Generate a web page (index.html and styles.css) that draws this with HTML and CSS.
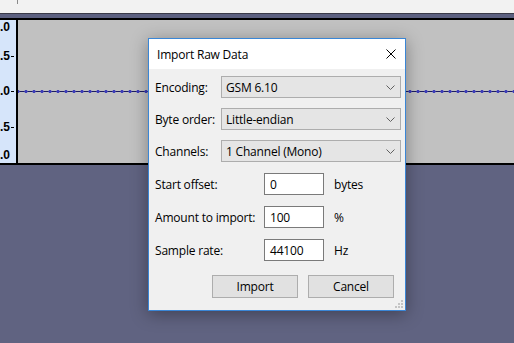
FILE: index.html
```html
<!DOCTYPE html>
<html lang="en">
<head>
<meta charset="UTF-8">
<title>Import Raw Data</title>
<link rel="stylesheet" href="styles.css">
</head>
<body>
    <div class="app">
        <!-- toolbar strip and track header -->
        <div class="toolbar"><span class="toolbar-sep"></span></div>
        <div class="band"></div>

        <!-- audio track -->
        <div class="track">
            <div class="ruler">
                <span class="mark m1">.0</span>
                <span class="mark m2">.5<i></i></span>
                <span class="mark m3">.0<i></i></span>
                <span class="mark m4">.5<i></i></span>
                <span class="mark m5">.0</span>
            </div>
            <div class="wave"><div class="wave-line"></div></div>
        </div>

        <!-- dialog -->
        <div class="dialog">
            <div class="titlebar">
                <span class="title">Import Raw Data</span>
                <svg class="close" width="10" height="10" viewBox="0 0 10 10">
                    <path d="M0.5 0.5 L9.5 9.5 M9.5 0.5 L0.5 9.5" stroke="#000" stroke-width="1" fill="none"/>
                </svg>
            </div>
            <div class="body">
                <div class="combos">
                    <label>Encoding:</label>
                    <div class="combo">GSM 6.10<svg width="9" height="5" viewBox="0 0 9 5"><path d="M0.5 0.5 L4.5 4.5 L8.5 0.5" stroke="#606060" fill="none"/></svg></div>
                    <label>Byte order:</label>
                    <div class="combo">Little-endian<svg width="9" height="5" viewBox="0 0 9 5"><path d="M0.5 0.5 L4.5 4.5 L8.5 0.5" stroke="#606060" fill="none"/></svg></div>
                    <label>Channels:</label>
                    <div class="combo">1 Channel (Mono)<svg width="9" height="5" viewBox="0 0 9 5"><path d="M0.5 0.5 L4.5 4.5 L8.5 0.5" stroke="#606060" fill="none"/></svg></div>
                </div>
                <div class="fields">
                    <label>Start offset:</label>
                    <div class="field">0</div>
                    <span class="unit">bytes</span>
                    <label>Amount to import:</label>
                    <div class="field">100</div>
                    <span class="unit">%</span>
                    <label>Sample rate:</label>
                    <div class="field">44100</div>
                    <span class="unit">Hz</span>
                </div>
                <div class="buttons">
                    <button>Import</button>
                    <button>Cancel</button>
                </div>
            </div>
            <svg class="grip" width="8" height="8" viewBox="0 0 8 8">
                <rect x="6" y="0" width="2" height="2" fill="#c4c4c4"/>
                <rect x="3" y="3" width="2" height="2" fill="#c4c4c4"/>
                <rect x="6" y="3" width="2" height="2" fill="#c4c4c4"/>
                <rect x="0" y="6" width="2" height="2" fill="#c4c4c4"/>
                <rect x="3" y="6" width="2" height="2" fill="#c4c4c4"/>
                <rect x="6" y="6" width="2" height="2" fill="#c4c4c4"/>
            </svg>
        </div>
    </div>
</body>
</html>
```

FILE: styles.css
```css
body {
    margin: 0;
    background-color: #606381;
    font-family: "Open Sans", sans-serif;
    font-size: 12px;
    color: #000;
}
.app {
    position: relative;
    width: 514px;
    height: 343px;
    overflow: hidden;
}
.toolbar {
    height: 13px;
    background-color: #f2f2f2;
    border-bottom: 1px solid #3a3a48;
}
.toolbar-sep {
    display: block;
    margin-left: 17px;
    width: 1px;
    height: 4px;
    background-color: #8a8a8a;
}
.band {
    height: 4px;
    background-color: #5c6080;
    border-bottom: 2px solid #000;
}
.track {
    display: flex;
    height: 143px;
    border-bottom: 2px solid #000;
}
.ruler {
    position: relative;
    width: 16px;
    background-color: #d6e5fa;
    border-right: 2px solid #000;
    font-family: "Liberation Sans", sans-serif;
    font-size: 12px;
    font-weight: bold;
}
.mark {
    position: absolute;
    left: 0;
    display: flex;
    align-items: center;
    line-height: 14px;
}
.mark i {
    display: block;
    width: 3px;
    height: 1px;
    margin-left: 1px;
    background-color: #000;
}
.m1 { top: 0px; }
.m2 { top: 29px; }
.m3 { top: 64px; }
.m4 { top: 100px; }
.m5 { top: 128px; }
.wave {
    flex: 1;
    display: flex;
    align-items: center;
    background-color: #c1c1c1;
}
.wave-line {
    width: 100%;
    height: 5px;
    margin-top: -1px;
    background:
        radial-gradient(circle, #3d3db8 1.4px, transparent 1.9px) -4px 0 / 8px 5px repeat-x,
        linear-gradient(#1c1c60, #1c1c60) 0 2px / 100% 1px no-repeat;
}

/* dialog */
.dialog {
    position: absolute;
    left: 148px;
    top: 38px;
    width: 258px;
    box-sizing: border-box;
    border: 1px solid #3a86d6;
    background-color: #f0f0f0;
    box-shadow: 0 3px 16px rgba(0, 0, 0, 0.35);
    letter-spacing: -0.2px;
}
.dialog label {
    white-space: nowrap;
}
.titlebar {
    height: 30px;
    background-color: #fff;
    display: flex;
    align-items: center;
    justify-content: space-between;
    padding: 0 9px 0 8px;
}
.body {
    padding: 7px 4px 12px 6px;
}
.combos {
    display: grid;
    grid-template-columns: 66px 1fr;
    row-gap: 10px;
    align-items: center;
}
.combo {
    height: 22px;
    box-sizing: border-box;
    border: 1px solid #adadad;
    background-color: #e5e5e5;
    display: flex;
    align-items: center;
    justify-content: space-between;
    padding: 0 5px 0 4px;
}
.fields {
    margin-top: 11px;
    display: grid;
    grid-template-columns: 99px 60px auto;
    column-gap: 10px;
    row-gap: 11px;
    align-items: center;
}
.field {
    height: 22px;
    box-sizing: border-box;
    border: 1px solid #7a7a7a;
    background-color: #fff;
    display: flex;
    align-items: center;
    padding-left: 5px;
}
.buttons {
    margin-top: 14px;
    display: flex;
    justify-content: flex-end;
    gap: 10px;
    padding-right: 7px;
}
button {
    width: 86px;
    height: 23px;
    border: 1px solid #adadad;
    background-color: #e1e1e1;
    font-family: "Open Sans", sans-serif;
    font-size: 12px;
    letter-spacing: -0.2px;
    color: #000;
    padding: 0;
}
.grip {
    position: absolute;
    right: 2px;
    bottom: 2px;
}
```
